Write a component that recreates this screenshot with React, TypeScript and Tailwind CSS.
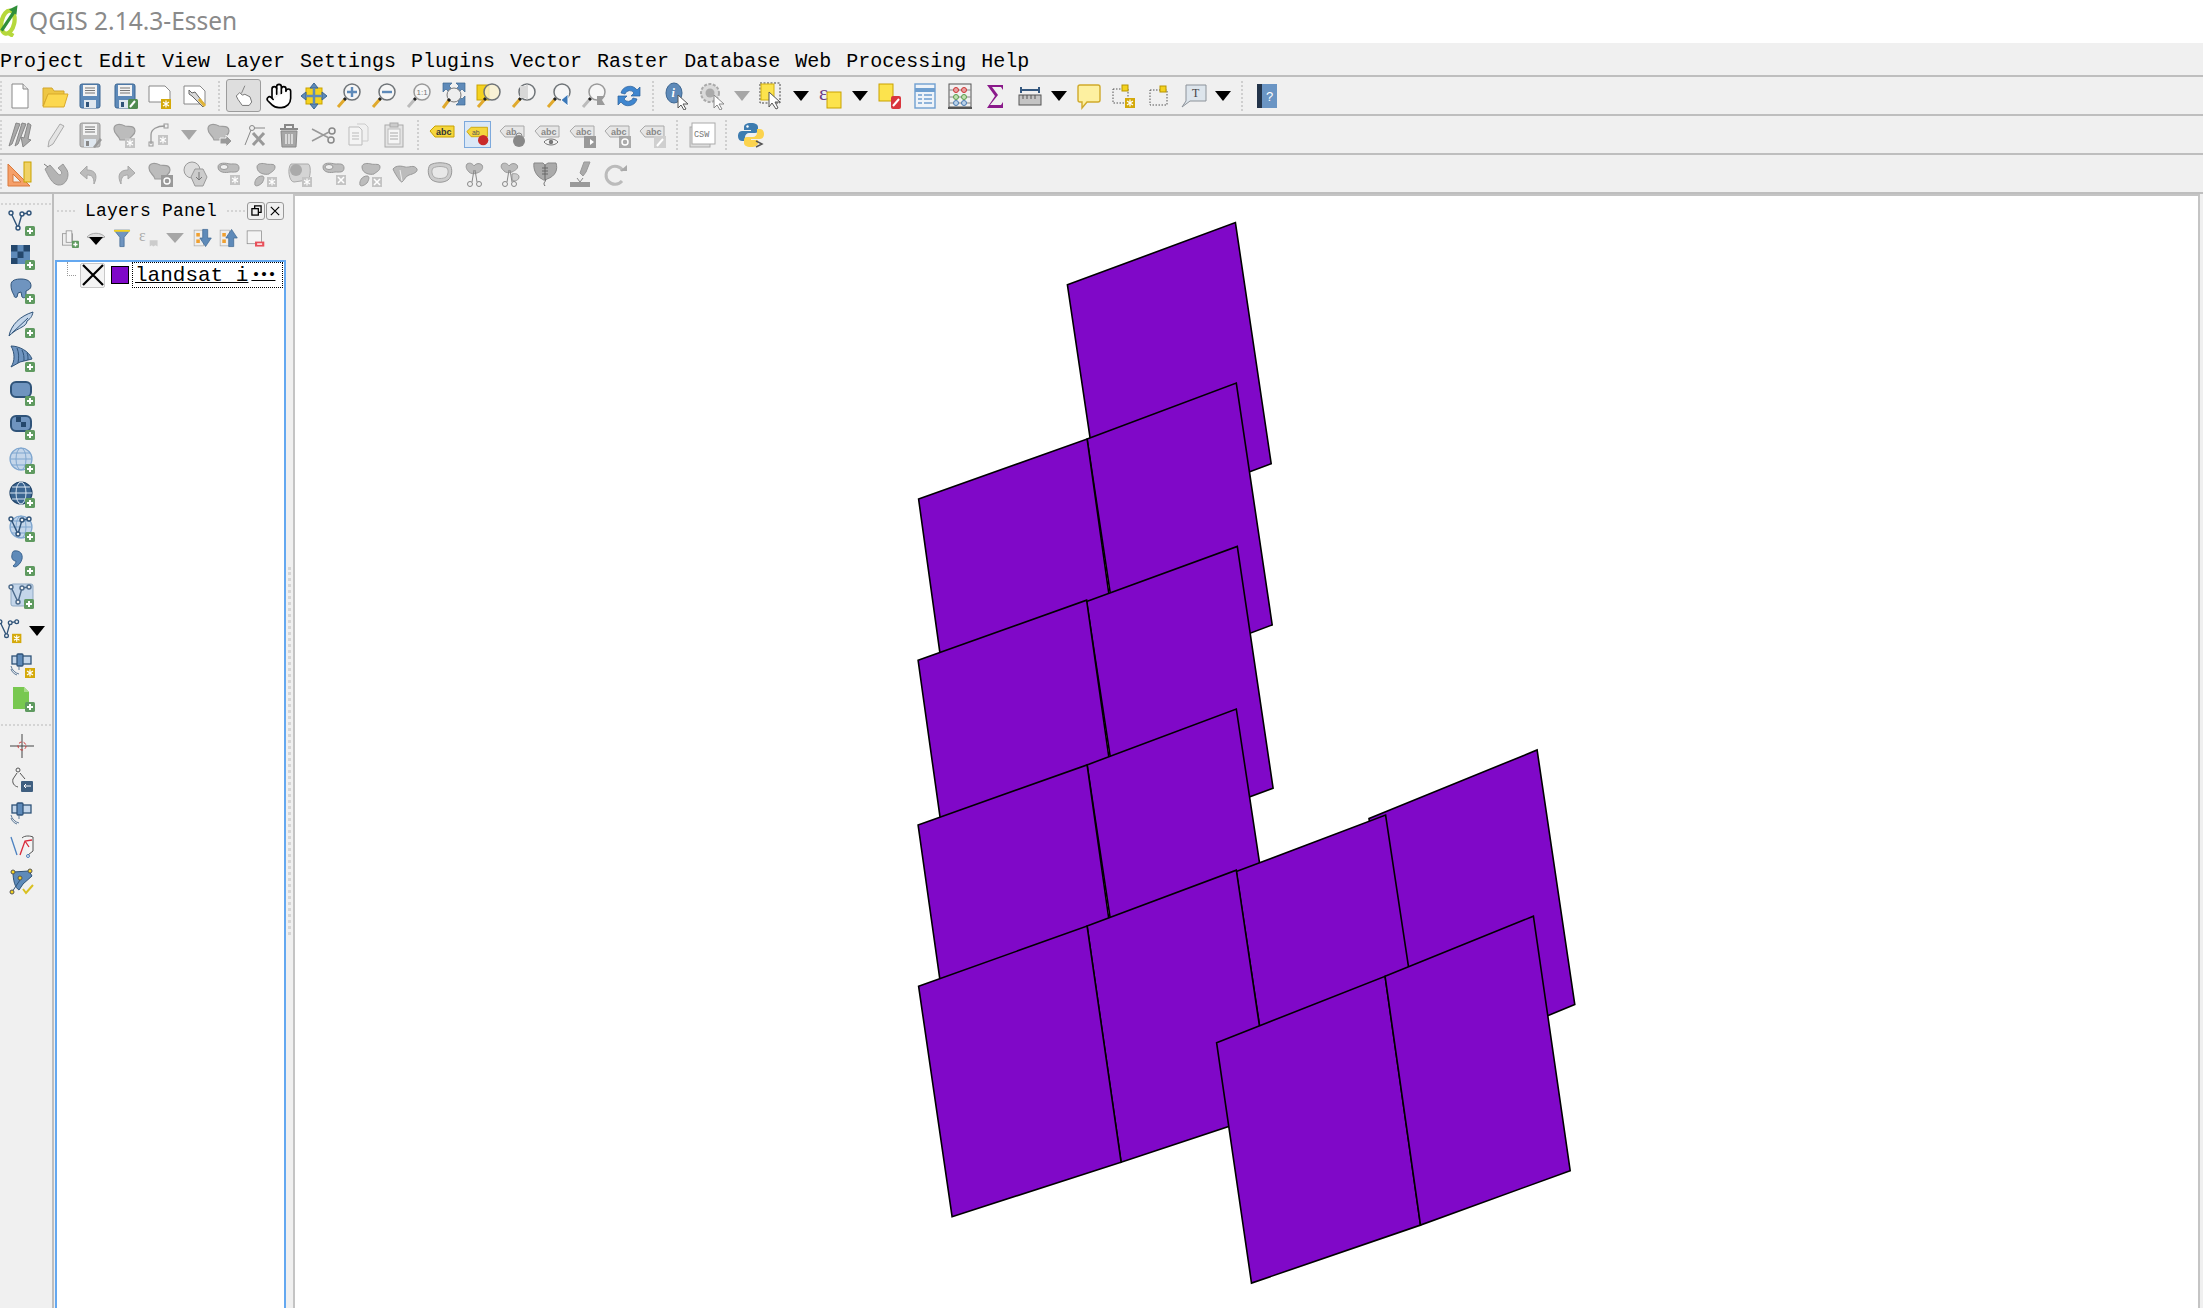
import React from "react";
import { Hand } from "lucide-react";

const BLUE = "#5e8ab9";
const DARK = "#2f5379";

function Ico({ size = 28, children }: { size?: number; children: React.ReactNode }) {
  return (
    <svg viewBox="0 0 28 28" width={size} height={size} fill="none" className="shrink-0">
      {children}
    </svg>
  );
}

const Plus = ({ x = 17, y = 17 }: { x?: number; y?: number }) => (
  <g>
    <rect x={x} y={y} width="10" height="10" rx="1.5" fill="#5f9a60" />
    <path d={`M${x + 5} ${y + 2}v6M${x + 2} ${y + 5}h6`} stroke="#fff" strokeWidth="2" />
  </g>
);

const Star = ({ x = 17, y = 17, fill = "#d4a90a" }: { x?: number; y?: number; fill?: string }) => (
  <g>
    <rect x={x} y={y} width="10" height="10" fill={fill} />
    <path d={`M${x + 5} ${y + 1.5}v7M${x + 2} ${y + 3}l6 4M${x + 8} ${y + 3}l-6 4`} stroke="#fff" strokeWidth="1.2" />
  </g>
);

const Cross = ({ x = 17, y = 17 }: { x?: number; y?: number }) => (
  <g>
    <rect x={x} y={y} width="10" height="10" fill="#c4c4c4" />
    <path d={`M${x + 2} ${y + 2}l6 6M${x + 8} ${y + 2}l-6 6`} stroke="#fff" strokeWidth="1.6" />
  </g>
);

const Mag = ({ gray, children }: { gray?: boolean; children?: React.ReactNode }) => (
  <Ico>
    <path d="M10 17L3 25" stroke={gray ? "#bbb" : "#e0a92c"} strokeWidth="3" />
    <path d="M11 16l-2 2" stroke="#222" strokeWidth="3" />
    <circle cx="17" cy="10" r="8" fill="#f6f6f6" stroke={gray ? "#999" : "#6f7478"} strokeWidth="1.5" />
    {children}
  </Ico>
);

const Floppy = ({ gray, children }: { gray?: boolean; children?: React.ReactNode }) => (
  <Ico>
    <rect x="4" y="2" width="20" height="24" rx="2" fill={gray ? "#bdbdbd" : BLUE} stroke={gray ? "#9a9a9a" : "#3b6591"} />
    <rect x="7" y="3" width="14" height="11" fill="#f2f2f2" />
    <path d="M9 6h10M9 8.5h10M9 11h10" stroke="#777" />
    <rect x="8" y="18" width="12" height="8" fill="#dfe7ef" />
    <rect x="10" y="20" width="3" height="5" fill={gray ? "#888" : DARK} />
    {children}
  </Ico>
);

const Blob = ({ children, fill = "#bcbcbc" }: { children?: React.ReactNode; fill?: string }) => (
  <Ico>
    <path d="M3 8C3 2 10 3 14 5c4 1 10-1 10 5 0 5-5 5-6 9H9C8 14 3 14 3 8z" fill={fill} stroke="#9c9c9c" strokeWidth="1.2" />
    {children}
  </Ico>
);

const Ring = ({ children }: { children?: React.ReactNode }) => (
  <Ico>
    <path d="M2 7c0-5 8-4 12-3 4 0 9-1 9 4 0 5-5 4-9 4-4 1-12 1-12-5z" fill="#bcbcbc" stroke="#999" />
    <ellipse cx="8" cy="7" rx="4" ry="2.5" fill="#f0f0f0" stroke="#999" />
    {children}
  </Ico>
);

const Two = ({ children }: { children?: React.ReactNode }) => (
  <Ico>
    <path d="M6 7c0-4 6-4 9-3 4 1 9-1 9 3 0 4-4 5-6 7-3 1-12 0-12-7z" fill="#bcbcbc" stroke="#999" />
    <path d="M4 25c-1-4 2-9 7-9 3 0 2 4 0 7-2 2-6 4-7 2z" fill="#bcbcbc" stroke="#999" />
    {children}
  </Ico>
);

const Label = ({ text = "abc", fill = "#e6e6e6", color = "#888", children }: { text?: string; fill?: string; color?: string; children?: React.ReactNode }) => (
  <Ico>
    <path d="M1 10l5-5h19v11H6z" fill={fill} stroke={fill === "#f5d63d" ? "#c9a200" : "#a8a8a8"} />
    <text x="7" y="14" fontSize="9" fontFamily="Liberation Sans, sans-serif" fontWeight="bold" fill={color}>{text}</text>
    {children}
  </Ico>
);

const Globe = ({ dark, children }: { dark?: boolean; children?: React.ReactNode }) => (
  <Ico>
    <circle cx="13" cy="12" r="11" fill={dark ? "#3b6591" : "#c4d6ea"} stroke={dark ? "#24476c" : "#7fa6cf"} strokeWidth="1.2" />
    <ellipse cx="13" cy="12" rx="5" ry="11" stroke={dark ? "#d8e4f0" : "#7fa6cf"} />
    <path d="M2 12h22M4 6h18M4 18h18" stroke={dark ? "#d8e4f0" : "#7fa6cf"} />
    {children}
  </Ico>
);

const Vee = ({ color = "#2f5379" }: { color?: string }) => (
  <g stroke={color} strokeWidth="1.4" fill="#f0f0f0">
    <path d="M3 4l7 15 4-14 7-1" fill="none" />
    <circle cx="3" cy="4" r="2" />
    <circle cx="10" cy="19" r="2" />
    <circle cx="14" cy="5" r="2" />
    <circle cx="21" cy="4" r="2" />
  </g>
);

const Pin = () => (
  <g>
    <rect x="4" y="5" width="19" height="8" fill="#c4d6ea" stroke={DARK} strokeWidth="1.3" />
    <rect x="9" y="3" width="6" height="12" rx="1" fill={BLUE} stroke={DARK} strokeWidth="1.3" />
    <path d="M11 15v4M3 15c1 4 4 7 8 8M3 18c1 3 3 5 6 6" stroke="#5d7a99" />
  </g>
);

const Down = ({ gray }: { gray?: boolean }) => (
  <svg viewBox="0 0 16 10" width="18" height="10" fill={gray ? "#a6a6a6" : "#000"} className="shrink-0">
    <path d="M0 0h16L8 10z" />
  </svg>
);

const Slot = ({ children }: { children: React.ReactNode }) => (
  <div className="flex h-[36px] w-[35px] shrink-0 items-center justify-center">{children}</div>
);

const Arrow = ({ gray }: { gray?: boolean }) => (
  <div className="flex h-[36px] w-[24px] shrink-0 items-center justify-center">
    <Down gray={gray} />
  </div>
);

const Sep = () => (
  <div className="flex w-[14px] shrink-0 justify-center">
    <div className="h-[30px] border-l-2 border-dotted border-[#cfcfcf]" />
  </div>
);

const Handle = () => <div className="h-[30px] w-[2px] shrink-0 border-l-2 border-dotted border-[#d4d4d4]" />;

function Row({ children }: { children: React.ReactNode }) {
  return <div className="flex h-[39px] shrink-0 items-center border-b-2 border-[#bebebe]">{children}</div>;
}

const menus = ["Project", "Edit", "View", "Layer", "Settings", "Plugins", "Vector", "Raster", "Database", "Web", "Processing", "Help"];

function ToolbarOne() {
  return (
    <Row>
      <Handle />
      <Slot><Ico><path d="M6 2h11l5 5v19H6z" fill="#fff" stroke="#888" /><path d="M17 2v5h5" fill="#e6e6e6" stroke="#888" /></Ico></Slot>
      <Slot><Ico><path d="M2 24V6h9l2 3h10v4H7z" fill="#eec643" stroke="#d2a52c" /><path d="M7 12h20l-4 13H2z" fill="#fcd84f" stroke="#d9a92a" /></Ico></Slot>
      <Slot><Floppy /></Slot>
      <Slot><Floppy><rect x="17" y="17" width="10" height="10" rx="1.5" fill="#4f8a4f" /><path d="M19 25l5-6" stroke="#fff" strokeWidth="2" /></Floppy></Slot>
      <Slot><Ico><path d="M3 4h16l5 5v11H3z" fill="#fff" stroke="#888" /><Star x={15} y={17} /></Ico></Slot>
      <Slot><Ico><path d="M3 4h16l5 5v13H3z" fill="#fff" stroke="#888" /><path d="M8 8l3 3 3-1 10 13-2 2-11-11-3-2z" fill="#d9d9d9" stroke="#666" /><path d="M18 17l6 7" stroke="#e0b43a" strokeWidth="3" /></Ico></Slot>
      <Sep />
      <div className="flex h-[33px] w-[35px] shrink-0 items-center justify-center rounded-[3px] border border-[#9c9c9c] bg-[#dedede]">
        <Ico size={24}><path d="M15 2l-4 9" stroke="#777" /><path d="M5 14l4-4 3 3 3-1 6 3 2 6-3 4h-8l-5-7z" fill="#fff" stroke="#666" /></Ico>
      </div>
      <Slot><Hand size={28} fill="#fff" stroke="#000" strokeWidth={1.4} /></Slot>
      <Slot><Ico><rect x="6" y="6" width="16" height="16" fill="#f4d21f" stroke="#c9a200" /><path d="M14 1l4 5h-8zM14 27l-4-5h8zM1 14l5-4v8zM27 14l-5 4v-8z" fill={BLUE} stroke="#3b6591" /><path d="M14 6v16M6 14h16" stroke={BLUE} strokeWidth="2.5" /></Ico></Slot>
      <Slot><Mag><path d="M17 5v10M12 10h10" stroke={BLUE} strokeWidth="2.4" /></Mag></Slot>
      <Slot><Mag><path d="M12 10h10" stroke={BLUE} strokeWidth="2.4" /></Mag></Slot>
      <Slot><Mag gray><text x="11.5" y="13" fontSize="8" fill="#777" fontFamily="Liberation Sans, sans-serif">1:1</text></Mag></Slot>
      <Slot><Ico><path d="M3 1h9L9 4l3 3-3 3-3-3-3 3zM25 1v9l-3-3-3 3-3-3 3-3-3-3zM25 23h-9l3-3-3-3 3-3 3 3 3-3z" fill={BLUE} stroke="#3b6591" strokeWidth=".7" /><circle cx="14" cy="13" r="7" fill="#eee" stroke="#777" /><path d="M9 18L3 26" stroke="#e0a92c" strokeWidth="3" /><path d="M10 17l-2 2" stroke="#222" strokeWidth="3" /></Ico></Slot>
      <Slot><Ico><rect x="2" y="3" width="12" height="15" fill="#f4d21f" stroke="#c9a200" /><path d="M10 17L3 25" stroke="#e0a92c" strokeWidth="3" /><path d="M11 16l-2 2" stroke="#222" strokeWidth="3" /><circle cx="17" cy="10" r="8" fill="#fbf3d0" fillOpacity=".8" stroke="#6f7478" strokeWidth="1.5" /></Ico></Slot>
      <Slot><Mag><path d="M17 2v16" stroke="#bbb" /><path d="M10 4h7v12h-7z" fill="#d8d8d8" /></Mag></Slot>
      <Slot><Mag><path d="M23 12l-7 6 7 6z" fill="#3b78b8" stroke="#fff" /></Mag></Slot>
      <Slot><Mag gray><path d="M17 14h8l-3 4 3 5h-8z" fill="#9a9a9a" /></Mag></Slot>
      <Slot><Ico><path d="M6 11a9 9 0 0 1 16-3l3-3v9h-9l3-3a5 5 0 0 0-9 1z" fill="#3f86cf" stroke="#2a5f99" strokeWidth=".7" /><path d="M22 17a9 9 0 0 1-16 3l-3 3v-9h9l-3 3a5 5 0 0 0 9-1z" fill="#3f86cf" stroke="#2a5f99" strokeWidth=".7" /></Ico></Slot>
      <Sep />
      <Slot><Ico><ellipse cx="10" cy="11" rx="8" ry="10" fill="#5e8ab9" stroke="#3b6591" /><text x="7.5" y="15" fontSize="12" fontWeight="bold" fontStyle="italic" fill="#fff" fontFamily="Liberation Serif, serif">i</text><path d="M14 13v13l3-3 3 5 2-1-3-5h5z" fill="#fff" stroke="#555" /></Ico></Slot>
      <Slot><Ico><circle cx="11" cy="11" r="9" fill="#dadada" stroke="#aaa" strokeWidth="2" strokeDasharray="3 1.5" /><circle cx="11" cy="11" r="4.5" fill="#aaa" /><path d="M15 13v13l3-3 3 5 2-1-3-5h5z" fill="#fff" stroke="#888" /></Ico></Slot>
      <Arrow gray />
      <Slot><Ico><rect x="2" y="1" width="20" height="20" stroke="#444" strokeDasharray="2 1.5" /><rect x="3" y="2" width="13" height="16" fill="#fce34d" stroke="#d2b010" /><path d="M11 10v15l3-4 4 6 2-1-3-6h5z" fill="#fff" stroke="#555" /></Ico></Slot>
      <Arrow />
      <Slot><Ico><rect x="10" y="10" width="14" height="16" fill="#fce34d" stroke="#c9a200" /><text x="2" y="18" fontSize="21" fill="#6d3a82" fontFamily="Liberation Serif, serif">ε</text></Ico></Slot>
      <Arrow />
      <Slot><Ico><rect x="3" y="2" width="14" height="17" fill="#fce34d" stroke="#c9a200" /><rect x="15" y="14" width="10" height="13" rx="2" fill="#d9363e" /><path d="M17 24l6-7" stroke="#fff" strokeWidth="2" /></Ico></Slot>
      <Slot><Ico><rect x="4" y="2" width="20" height="24" fill="#eef3f9" stroke="#6f9fd0" strokeWidth="1.4" /><path d="M4 8h20" stroke="#6f9fd0" strokeWidth="4" /><path d="M7 13h4M13 13h8M7 17h4M13 17h8M7 21h4M13 21h8" stroke="#6f9fd0" strokeWidth="1.4" /></Ico></Slot>
      <Slot><Ico><rect x="3" y="2" width="22" height="23" stroke="#555" /><path d="M2 26h24" stroke="#555" strokeWidth="2" /><path d="M3 8h22M3 15h22M3 21h22" stroke="#888" /><circle cx="10" cy="8" r="2.5" fill="#e8a0a0" stroke="#c33" /><circle cx="18" cy="8" r="2.5" fill="#e8a0a0" stroke="#c33" /><circle cx="10" cy="15" r="2.5" fill="#bfe0b0" stroke="#5a9a4a" /><circle cx="18" cy="15" r="2.5" fill="#bfe0b0" stroke="#5a9a4a" /><circle cx="10" cy="21" r="2.5" fill="#bcd3ea" stroke="#4a7ab0" /><circle cx="18" cy="21" r="2.5" fill="#bcd3ea" stroke="#4a7ab0" /></Ico></Slot>
      <Slot><Ico><path d="M6 3h16v5l-2-3H11l6 8-8 10h11l2-3v6H6l8-12z" fill="#8a1a8a" /></Ico></Slot>
      <Slot><Ico><path d="M5 5v6M23 5v6M5 8h18" stroke="#35587f" strokeWidth="2" /><rect x="3" y="13" width="22" height="10" fill="#c4c4c4" stroke="#555" /><path d="M7 13v4M11 13v4M15 13v4M19 13v4" stroke="#555" /></Ico></Slot>
      <Arrow />
      <Slot><Ico><path d="M5 3h18a2 2 0 0 1 2 2v13a2 2 0 0 1-2 2H12l-5 6v-6H5a2 2 0 0 1-2-2V5a2 2 0 0 1 2-2z" fill="#fdf0a0" stroke="#cfa92a" strokeWidth="1.4" /></Ico></Slot>
      <Slot><Ico><rect x="3" y="7" width="15" height="14" stroke="#555" strokeDasharray="1.5 1.5" /><rect x="12" y="3" width="6" height="6" fill="#f4d21f" stroke="#b89500" /><Star x={15} y={16} /></Ico></Slot>
      <Slot><Ico><rect x="5" y="8" width="17" height="15" stroke="#555" strokeDasharray="1.5 1.5" /><rect x="15" y="4" width="6" height="6" fill="#f4d21f" stroke="#b89500" /></Ico></Slot>
      <Slot><Ico><path d="M6 3h20v16H10l-8 6 4-6z" fill="#dde5ec" stroke="#8c9299" /><text x="12" y="15" fontSize="12" fill="#444" fontFamily="Liberation Serif, serif">T</text></Ico></Slot>
      <Arrow />
      <Sep />
      <Slot><Ico><rect x="4" y="2" width="20" height="24" fill="#6a95c4" /><rect x="4" y="2" width="5" height="24" fill="#23344a" /><text x="13" y="19" fontSize="13" fill="#fff" fontFamily="Liberation Sans, sans-serif">?</text></Ico></Slot>
    </Row>
  );
}

function ToolbarTwo() {
  return (
    <Row>
      <Handle />
      <Slot><Ico><path d="M10 2l4 1-8 20-3 2zM16 2l4 1-8 20-3 2zM22 2l3 2-3 14 3 1-8 7-2-10 3 1z" fill="#aaa" stroke="#888" /></Ico></Slot>
      <Slot><Ico><path d="M19 3l4 2-11 18-5 3 1-6z" fill="#e4e4e4" stroke="#aaa" /></Ico></Slot>
      <Slot><Floppy gray><path d="M17 26l7-9 2 2-7 8z" fill="#999" /></Floppy></Slot>
      <Slot><Blob><Star x={14} y={17} fill="#c4c4c4" /></Blob></Slot>
      <Slot><Ico><path d="M5 23V14C5 8 11 5 19 5" stroke="#999" strokeWidth="1.3" /><rect x="3" y="21" width="4" height="4" stroke="#999" /><rect x="18" y="3" width="4" height="4" stroke="#999" /><Star x={12} y={14} fill="#c4c4c4" /></Ico></Slot>
      <Arrow gray />
      <Slot><Blob><path d="M15 17h6v-3l6 6-6 6v-3h-6z" fill="#999" stroke="#f0f0f0" /></Blob></Slot>
      <Slot><Ico><circle cx="12" cy="7" r="2.5" stroke="#888" /><path d="M11 9L5 24M14 7h11" stroke="#888" /><path d="M13 12l11 12M24 12L13 24" stroke="#999" strokeWidth="3" /></Ico></Slot>
      <Slot><Ico><path d="M5 8h18M10 8V4h8v4" stroke="#888" strokeWidth="2" /><path d="M6 10h16l-1 16H7z" fill="#a6a6a6" stroke="#888" /><path d="M11 13v10M14 13v10M17 13v10" stroke="#eee" strokeWidth="1.4" /></Ico></Slot>
      <Slot><Ico><circle cx="21" cy="19" r="3" stroke="#888" strokeWidth="1.5" /><circle cx="22" cy="10" r="3" stroke="#888" strokeWidth="1.5" /><path d="M2 8l17 9M2 20l17-9" stroke="#999" strokeWidth="1.5" /></Ico></Slot>
      <Slot><Ico><path d="M4 6h10l3 3v15H4z" fill="#f4f4f4" stroke="#bbb" /><path d="M12 3h8l3 3v14h-6" stroke="#ccc" /><path d="M7 12h7M7 15h7M7 18h7" stroke="#bbb" /></Ico></Slot>
      <Slot><Ico><rect x="5" y="4" width="18" height="22" fill="#e4e4e4" stroke="#aaa" /><rect x="8" y="8" width="12" height="15" fill="#f6f6f6" stroke="#bbb" /><rect x="10" y="2" width="8" height="4" fill="#ccc" stroke="#aaa" /><path d="M10 12h8M10 15h8M10 18h8" stroke="#aaa" /></Ico></Slot>
      <Sep />
      <Slot><Label fill="#f5d63d" color="#333" /></Slot>
      <div className="flex h-[33px] w-[35px] shrink-0 items-center justify-center">
        <div className="flex size-[27px] items-center justify-center border border-[#7da9dc] bg-[#dbe8f6]">
          <Ico size={24}><path d="M1 10l5-5h19v11H6z" fill="#f5d63d" stroke="#c9a200" /><text x="7" y="14" fontSize="8" fill="#555" fontFamily="Liberation Sans, sans-serif">ab</text><circle cx="20" cy="20" r="6" fill="#c92a2a" /></Ico>
        </div>
      </div>
      <Slot><Label text="ab"><circle cx="20" cy="20" r="6" fill="#888" /><path d="M17 15a3 3 0 0 1 6 0" stroke="#888" /></Label></Slot>
      <Slot><Label><path d="M10 21c3-4 11-4 14 0-3 4-11 4-14 0z" fill="#f4f4f4" stroke="#777" /><circle cx="17" cy="21" r="2.2" fill="#777" /></Label></Slot>
      <Slot><Label><rect x="15" y="15" width="12" height="12" fill="#999" /><path d="M17 21h4v-3l4 3-4 3v-3" fill="#fff" /></Label></Slot>
      <Slot><Label><rect x="15" y="15" width="12" height="12" fill="#aaa" /><circle cx="21" cy="21" r="3" stroke="#fff" strokeWidth="1.5" /></Label></Slot>
      <Slot><Label><rect x="15" y="15" width="12" height="12" fill="#cfcfcf" /><path d="M18 25l6-7" stroke="#fff" strokeWidth="2" /></Label></Slot>
      <Sep />
      <Slot><Ico><rect x="2" y="6" width="20" height="20" fill="#ddd" stroke="#aaa" /><rect x="4" y="2" width="23" height="21" fill="#fff" stroke="#aaa" /><text x="6" y="16" fontSize="8.5" fill="#777" fontFamily="Liberation Mono, monospace">CSW</text></Ico></Slot>
      <Sep />
      <Slot><Ico><path d="M14 2c-5 0-7 2-7 4v3h7v1H5c-3 0-4 3-4 5s1 5 4 5h3v-4c0-2 2-4 4-4h6c2 0 3-1 3-3V6c0-2-2-4-7-4z" fill="#3d7cb0" /><circle cx="10.5" cy="5.5" r="1.2" fill="#fff" /><path d="M14 26c5 0 7-2 7-4v-3h-7v-1h9c3 0 4-3 4-5s-1-5-4-5h-3v4c0 2-2 4-4 4h-6c-2 0-3 1-3 3v3c0 2 2 4 7 4z" fill="#fbd34e" /><path d="M19 20l6 3-6 3" stroke="#555" strokeWidth="1.5" /></Ico></Slot>
    </Row>
  );
}

function ToolbarThree() {
  return (
    <Row>
      <Handle />
      <Slot><Ico><path d="M2 4l22 22H2z" fill="#f5a06a" stroke="#d9793a" /><path d="M7 14l8 8H7z" fill="#f0f0f0" stroke="#d9793a" /><rect x="18" y="2" width="7" height="20" fill="#f0d264" stroke="#c9a200" /></Ico></Slot>
      <Slot><Ico><path d="M4 9l5-4 8 9c2 2 5 0 3-3l-3-3 5-4 4 6c3 6-1 16-9 15-6-1-9-8-13-16z" fill="#b4b4b4" stroke="#999" /><path d="M3 4l4 3" stroke="#777" /></Ico></Slot>
      <Slot><Ico><path d="M11 6L4 13l7 6v-4c5 0 7 2 7 9 4-8 2-14-7-14z" fill="#bcbcbc" stroke="#a8a8a8" /></Ico></Slot>
      <Slot><Ico><path d="M17 6l7 7-7 6v-4c-5 0-7 2-7 9-4-8-2-14 7-14z" fill="#bcbcbc" stroke="#a8a8a8" /></Ico></Slot>
      <Slot><Blob><rect x="15" y="15" width="12" height="12" fill="#999" /><circle cx="21" cy="21" r="3" stroke="#fff" strokeWidth="1.4" /></Blob></Slot>
      <Slot><Ico><circle cx="11" cy="10" r="8" fill="#ddd" stroke="#999" /><path d="M14 9l8 0 4 8-4 9h-8l-4-9z" fill="#ccc" stroke="#999" /><path d="M18 12v8M15 17l3 3 3-3" stroke="#777" /></Ico></Slot>
      <Slot><Ring><Star x={14} y={15} fill="#c4c4c4" /></Ring></Slot>
      <Slot><Two><Star x={16} y={17} fill="#c4c4c4" /></Two></Slot>
      <Slot><Ico><path d="M5 4h17c3 0 3 12 0 16l-14 2C3 22 1 8 5 4z" fill="#d4d4d4" stroke="#aaa" /><circle cx="10" cy="10" r="6" fill="#aaa" /><Star x={16} y={17} fill="#c4c4c4" /></Ico></Slot>
      <Slot><Ring><Cross x={15} y={15} /></Ring></Slot>
      <Slot><Two><Cross x={16} y={17} /></Two></Slot>
      <Slot><Ico><path d="M2 9c3-4 9-3 12-2 4 1 9-3 12 2 1 3-4 5-8 6-3 1-4 4-7 7-1 1-7-8-9-13z" fill="#bcbcbc" stroke="#999" /><path d="M9 10l2 11" stroke="#eee" /></Ico></Slot>
      <Slot><Ico><path d="M4 5c5-3 15-3 20 0 3 4 2 12-2 15-5 3-11 3-16 0-4-3-5-11-2-15z" fill="#ccc" stroke="#999" /><path d="M7 8c4-2 10-2 14 0 2 3 1 7-1 9-3 2-9 2-12 0-2-2-3-6-1-9z" fill="#e8e8e8" stroke="#aaa" /></Ico></Slot>
      <Slot><Ico><path d="M6 4c3-2 6 0 7 2 2-3 6-3 8-1 2 3-1 7-5 8-3 1-6 1-8-1-2-2-4-5-2-8z" fill="#bcbcbc" stroke="#999" /><path d="M13 10l-2 12M14 10l2 12" stroke="#888" /><circle cx="9" cy="24" r="2.5" stroke="#888" /><circle cx="18" cy="24" r="2.5" stroke="#888" /></Ico></Slot>
      <Slot><Ico><path d="M6 4c3-2 6 0 7 2 2-3 6-3 8-1 2 3-1 5-5 7-3 1-6 1-8-1-2-2-4-4-2-7z" fill="#bcbcbc" stroke="#999" /><path d="M16 14c3-1 7 0 7 3s-4 5-7 3z" fill="#ccc" stroke="#999" /><path d="M13 10l-2 12M14 10l2 12" stroke="#888" /><circle cx="9" cy="24" r="2.5" stroke="#888" /><circle cx="18" cy="24" r="2.5" stroke="#888" /></Ico></Slot>
      <Slot><Ico><path d="M3 3h9l2 2 3-2h8c2 6 0 13-9 16-2 2-4 1-5 0C5 16 2 9 3 3z" fill="#aaa" stroke="#888" /><path d="M14 5v14M11 8h6M11 11h6M11 14h6M14 19c2 3-3 3 0 7" stroke="#666" /></Ico></Slot>
      <Slot><Ico><path d="M18 2h6l-4 10-3 4-3-3z" fill="#aaa" stroke="#999" /><rect x="4" y="22" width="20" height="5" fill="#999" /><path d="M11 18l3 4 3-4" fill="#eee" stroke="#888" /></Ico></Slot>
      <Slot><Ico><path d="M22 11A9 9 0 1 0 21 21" stroke="#bbb" strokeWidth="3" /><path d="M19 11h7V5z" fill="#aaa" /></Ico></Slot>
    </Row>
  );
}

const Vert = ({ children }: { children: React.ReactNode }) => (
  <div className="flex h-[34px] shrink-0 items-center justify-center pr-[8px]">{children}</div>
);

function LeftToolbar() {
  return (
    <div className="flex w-[54px] shrink-0 flex-col border-r-2 border-[#bebebe] pt-[9px]">
      <div className="mx-[1px] mb-[1px] h-[2px] border-t-2 border-dotted border-[#d4d4d4]" />
      <Vert><Ico><Vee /><Plus /></Ico></Vert>
      <Vert><Ico><rect x="3" y="2" width="19" height="19" fill={BLUE} /><rect x="3" y="2" width="6.5" height="6.5" fill="#24476c" /><rect x="15.5" y="2" width="6.5" height="6.5" fill="#24476c" /><rect x="9.5" y="8.5" width="6" height="6.5" fill="#24476c" /><rect x="3" y="15" width="6.5" height="6" fill="#24476c" /><Plus /></Ico></Vert>
      <Vert><Ico><path d="M3 8c0-5 5-6 10-6 6 0 10 2 10 7 0 3-3 4-5 5v6c-2 1-3 1-4 0l-1-5-3 1-1 4c-2 1-3 0-3-2-2-3-3-6-3-10z" fill="#6f94bf" stroke={DARK} /><Plus /></Ico></Vert>
      <Vert><Ico><path d="M1 25C3 14 12 5 25 1c-1 5-3 7-6 9 0 3-3 5-5 6-3 2-7 3-13 9z" fill="#c4d6ea" stroke={DARK} /><path d="M4 22L20 7" stroke={DARK} /><Plus /></Ico></Vert>
      <Vert><Ico><path d="M3 1c8 0 18 5 21 13l-12 3-9 5c4-6 4-14 0-21z" fill="#6f94bf" stroke={DARK} /><path d="M9 3c2 5 2 9 1 15M14 5c2 4 2 7 2 11M19 8c1 2 1 4 1 7" stroke={DARK} /><Plus /></Ico></Vert>
      <Vert><Ico><rect x="3" y="3" width="20" height="15" rx="5" fill="#6f94bf" stroke={DARK} strokeWidth="2" /><Plus /></Ico></Vert>
      <Vert><Ico><rect x="3" y="3" width="20" height="15" rx="5" fill="#6f94bf" stroke={DARK} strokeWidth="2" /><rect x="8" y="4" width="5" height="5" fill="#24476c" /><rect x="13" y="9" width="5" height="5" fill="#24476c" /><Plus /></Ico></Vert>
      <Vert><Globe><Plus /></Globe></Vert>
      <Vert><Globe dark><Plus /></Globe></Vert>
      <Vert><Globe><Vee /><Plus /></Globe></Vert>
      <Vert><Ico><path d="M6 2c6-1 9 3 8 8-1 4-4 7-7 8l-2-1c2-2 3-3 3-5-3 0-5-3-4-6 0-2 1-4 2-4z" fill={BLUE} stroke="#3b6591" /><Plus /></Ico></Vert>
      <Vert><Ico><rect x="3" y="1" width="22" height="22" rx="2" fill="#c4d6ea" stroke="#8fa9c4" /><Vee color="#4c6a8a" /><Plus x={16} y={16} /></Ico></Vert>
      <div className="flex h-[34px] shrink-0 items-center">
        <Ico size={26}><g transform="translate(-3 0)"><Vee /></g><Star x={13} y={17} /></Ico>
        <div className="ml-[2px]"><Down /></div>
      </div>
      <Vert><Ico><Pin /><Star x={17} y={17} /></Ico></Vert>
      <Vert><Ico><path d="M5 2h11l5 5v17H5z" fill="#78c850" /><path d="M16 2v5h5" fill="#a8dc8a" /><Plus /></Ico></Vert>
      <div className="mx-[1px] mb-[3px] mt-[8px] h-[2px] border-t-2 border-dotted border-[#d4d4d4]" />
      <Vert><Ico><path d="M14 2v24M2 14h24" stroke="#444" /><circle cx="14" cy="14" r="4" stroke="#c33" strokeDasharray="3 2" /></Ico></Vert>
      <Vert><Ico><circle cx="10" cy="4" r="2" stroke="#555" /><path d="M9 7l-4 6c-1 4 1 7 5 8M12 7l5 6" stroke="#555" /><rect x="13" y="15" width="12" height="11" rx="1" fill="#3f5f80" /><path d="M16 20h7M18 18l-2 2 2 2" stroke="#fff" /></Ico></Vert>
      <Vert><Ico><Pin /></Ico></Vert>
      <Vert><Ico><path d="M14 4c3-3 9-2 11-1v14l-5 4" fill="#f4f4f4" stroke="#555" /><path d="M3 3l6 18" stroke="#4a80c0" strokeWidth="1.3" /><path d="M12 21l5-14 7-1M17 7l4 6" stroke="#d92a3a" strokeWidth="1.3" /><circle cx="20" cy="22" r="1.5" stroke="#4a80c0" /></Ico></Vert>
      <Vert><Ico><path d="M5 4l16-1 3 5-9 8-4 6c-4-2-6-10-6-18z" fill={BLUE} stroke={DARK} /><path d="M4 24L12 12" stroke={DARK} /><circle cx="5" cy="4" r="2" fill="#f4d21f" stroke="#555" /><circle cx="22" cy="3" r="2" fill="#f4d21f" stroke="#555" /><circle cx="12" cy="10" r="2" fill="#f4d21f" stroke="#555" /><circle cx="4" cy="24" r="2" fill="#f4d21f" stroke="#555" /><path d="M15 21l3 4 7-8" stroke="#d9c020" strokeWidth="2" /></Ico></Vert>
    </div>
  );
}

const Tool = ({ children }: { children: React.ReactNode }) => (
  <div className="flex h-[22px] w-[26.5px] shrink-0 items-center justify-center">{children}</div>
);

function LayersPanel() {
  return (
    <div className="flex w-[239px] shrink-0 flex-col">
      <div className="flex h-[29px] shrink-0 items-center pt-[4px]">
        <div className="ml-[3px] w-[18px] border-t-2 border-dotted border-[#d4d4d4]" />
        <span className="ml-[10px] text-[18px] leading-none tracking-[0.2px] text-black">Layers Panel</span>
        <div className="ml-[10px] w-[18px] border-t-2 border-dotted border-[#d4d4d4]" />
        <div className="ml-[2px] flex size-[18px] items-center justify-center rounded-[3px] border border-[#999]">
          <svg viewBox="0 0 12 12" width="11" height="11" fill="none" stroke="#000" strokeWidth="1.4"><rect x="1" y="4" width="7" height="7" /><path d="M4 4V1h7v7H8" /></svg>
        </div>
        <div className="ml-[1px] flex size-[18px] items-center justify-center rounded-[3px] border border-[#999]">
          <svg viewBox="0 0 12 12" width="10" height="10" stroke="#000" strokeWidth="1.4"><path d="M1 1l10 10M11 1L1 11" /></svg>
        </div>
      </div>
      <div className="flex h-[37px] shrink-0 items-center pb-[7px] pl-[2px]">
        <Tool><Ico size={20}><rect x="5" y="8" width="14" height="16" fill="#eee" stroke="#888" /><rect x="10" y="4" width="8" height="16" fill="#f4f4f4" stroke="#888" /><Plus x={18} y={18} /></Ico></Tool>
        <Tool><svg viewBox="0 0 20 14" width="20" height="14"><path d="M1 6c4-5 14-5 18 0l-3 1H4z" fill="#ddd" stroke="#aaa" /><path d="M3 6h14l-7 8z" fill="#000" /></svg></Tool>
        <Tool><Ico size={20}><path d="M3 3h22l-8 10v13h-6V13z" fill="#6f94bf" stroke="#3b6591" /><path d="M3 4h22" stroke="#f4d21f" strokeWidth="2.5" /></Ico></Tool>
        <Tool><Ico size={20}><text x="0" y="18" fontSize="22" fill="#aaa" fontFamily="Liberation Serif, serif">ε</text><path d="M15 17h11v9l-3-2-3 2-2-2-3 2z" fill="#ccc" /></Ico></Tool>
        <Tool><svg viewBox="0 0 16 9" width="18" height="10" fill="#a6a6a6"><path d="M0 0h16L8 9z" /></svg></Tool>
        <Tool><Ico size={20}><rect x="3" y="3" width="13" height="22" fill="#eee" stroke="#aaa" /><rect x="6" y="7" width="5" height="5" fill="#f0a030" /><rect x="6" y="16" width="5" height="5" fill="#f0a030" /><path d="M15 2h7v12h5l-8 12-8-12h4z" fill={BLUE} stroke="#3b6591" /></Ico></Tool>
        <Tool><Ico size={20}><rect x="3" y="3" width="13" height="22" fill="#eee" stroke="#aaa" /><rect x="6" y="7" width="5" height="5" fill="#f0a030" /><rect x="6" y="16" width="5" height="5" fill="#f0a030" /><path d="M15 26h7V14h5L19 2l-8 12h4z" fill={BLUE} stroke="#3b6591" /></Ico></Tool>
        <Tool><Ico size={20}><rect x="3" y="4" width="20" height="18" fill="#f4f4f4" stroke="#888" /><rect x="14" y="19" width="13" height="7" fill="#e8505a" /><path d="M17 22.5h7" stroke="#fff" strokeWidth="2" /></Ico></Tool>
      </div>
      <div className="flex min-h-0 flex-1">
        <div className="ml-[1px] flex w-[231px] shrink-0 flex-col border-x-2 border-t-2 border-[#64a8f0] bg-white">
          <div className="flex h-[26px] items-center">
            <div className="ml-[10px] h-[14px] w-[9px] self-start border-b border-l border-dotted border-[#999]" />
            <div className="ml-[4px] flex size-[25px] items-center justify-center rounded-[2px] border border-[#c8c8c8] bg-[#f4f4f4]">
              <svg viewBox="0 0 22 22" width="22" height="22" stroke="#000" strokeWidth="2.2"><path d="M1 1l20 20M21 1L1 21" /></svg>
            </div>
            <div className="ml-[6px] size-[18px] border border-black bg-[#7f08c8]" />
            <div className="ml-[3px] flex h-[26px] w-[151px] items-center overflow-hidden border border-dotted border-black pl-[2px] text-[21px] leading-none text-black underline decoration-1 underline-offset-1">
              landsat_i<span className="ml-[3px] inline-block text-[15px] tracking-[-1px] no-underline">•••</span>
            </div>
          </div>
        </div>
        <div className="flex flex-1 items-center justify-center pb-[66px]">
          <div className="h-[368px] border-l-[3px] border-dotted border-[#d6d6d6]" />
        </div>
      </div>
    </div>
  );
}

const tiles: number[][][] = [
  [[408, 120], [774, 32], [852, 373], [486, 462]],
  [[451, 338], [776, 259], [854, 601], [530, 680]],
  [[84, 423], [451, 338], [525, 680], [157, 765]],
  [[450, 568], [778, 490], [856, 832], [530, 910]],
  [[83, 651], [450, 566], [525, 910], [157, 995]],
  [[451, 799], [776, 720], [855, 1060], [530, 1140]],
  [[83, 884], [451, 799], [525, 1140], [157, 1225]],
  [[1065, 875], [1431, 778], [1513, 1138], [1150, 1235]],
  [[776, 950], [1101, 870], [1180, 1210], [855, 1290]],
  [[451, 1027], [776, 948], [854, 1290], [525, 1361]],
  [[84, 1112], [451, 1027], [525, 1361], [157, 1438]],
  [[733, 1192], [1100, 1098], [1177, 1450], [809, 1532]],
  [[1100, 1098], [1423, 1013], [1503, 1373], [1177, 1450]],
];

// tile points were read off a crop, so map them back to page pixels
const toPoints = (tile: number[][]) =>
  tile.map(([x, y]) => `${(880 + x * 0.4592 - 295).toFixed(1)},${(200 + y * 0.707 - 196).toFixed(1)}`).join(" ");

function MapCanvas() {
  return (
    <div className="mr-[3px] min-w-0 flex-1 overflow-hidden border-x-2 border-t-2 border-[#c4c4c4] bg-white">
      <svg width="1903" height="1112" className="block">
        {tiles.map((t, i) => (
          <polygon key={i} points={toPoints(t)} fill="#8008c8" stroke="#000" strokeWidth="1.6" />
        ))}
      </svg>
    </div>
  );
}

export default function App() {
  return (
    <div className="flex h-[1308px] w-full flex-col overflow-hidden bg-[#f0f0f0] font-['Liberation_Mono',monospace] text-black">
      <div className="flex h-[43px] shrink-0 items-center bg-white">
        <svg viewBox="0 0 20 32" width="22" height="34" fill="none" className="ml-[-2px] mt-[-3px]">
          <ellipse cx="9" cy="18" rx="6" ry="11" stroke="#b6d83c" strokeWidth="4" transform="rotate(12 9 18)" />
          <path d="M9 28l5 3" stroke="#b6d83c" strokeWidth="4" />
          <path d="M3 26L15 8" stroke="#2f8f3a" strokeWidth="3" />
          <path d="M10 6l8-4-1 9z" fill="#2f8f3a" />
        </svg>
        <span className="ml-[9px] font-['Noto_Sans',sans-serif] text-[24.5px] leading-none text-[#8a8a8a]">QGIS 2.14.3-Essen</span>
      </div>
      <div className="flex h-[34px] shrink-0 items-center gap-[15px] border-b-2 border-[#bebebe] pt-[5px] text-[20px] leading-none">
        {menus.map((m) => (
          <span key={m}>{m}</span>
        ))}
      </div>
      <ToolbarOne />
      <ToolbarTwo />
      <ToolbarThree />
      <div className="flex min-h-0 flex-1">
        <LeftToolbar />
        <LayersPanel />
        <MapCanvas />
      </div>
    </div>
  );
}
